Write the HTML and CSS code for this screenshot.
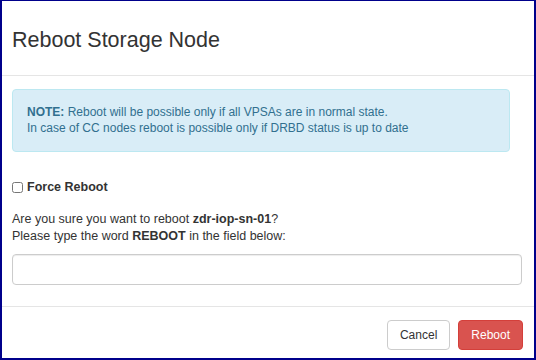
FILE: index.html
```html
<!doctype html>
<html lang="en">
<head>
    <meta charset="UTF-8">
    <title>Reboot Storage Node</title>
    <link rel="stylesheet" href="styles.css">
</head>
<body>
<div class="modal">
    <div class="modal-header">
        <h4 class="modal-title">Reboot Storage Node</h4>
    </div>
    <div class="modal-body">
        <div class="alert">
            <b>NOTE:</b> Reboot will be possible only if all VPSAs are in normal state.<br>
            In case of CC nodes reboot is possible only if DRBD status is up to date
        </div>
        <label class="check">
            <input type="checkbox">
            <span>Force Reboot</span>
        </label>
        <p class="confirm">
            Are you sure you want to reboot <b>zdr-iop-sn-01</b>?<br>
            Please type the word <b>REBOOT</b> in the field below:
        </p>
        <input class="form-control" type="text">
    </div>
    <div class="modal-footer">
        <button class="btn btn-default">Cancel</button>
        <button class="btn btn-danger">Reboot</button>
    </div>
</div>
</body>
</html>
```

FILE: styles.css
```css
* {
    margin: 0;
    padding: 0;
    box-sizing: border-box;
}

html,
body {
    width: 100%;
    height: 100%;
}

body {
    background: #fff;
    font-family: "Liberation Sans", Arial, sans-serif;
    font-size: 12px;
    color: #333;
}

.modal {
    display: flex;
    flex-direction: column;
    width: 536px;
    height: 360px;
    border-style: solid;
    border-color: #00008b;
    border-width: 1px 2px 2px 2px;
}

.modal-header {
    height: 75px;
    padding: 0 10px;
    display: flex;
    align-items: center;
    border-bottom: 1px solid #e5e5e5;
}

.modal-title {
    font-size: 21.5px;
    font-weight: normal;
    color: #333;
    padding-top: 4px;
}

.modal-body {
    flex: 1;
    padding: 13px 10px 0;
}

.alert {
    width: 498px;
    padding: 14px 14px 15px;
    line-height: 16px;
    background-color: #d9edf7;
    border: 1px solid #bce8f1;
    border-radius: 4px;
    color: #31708f;
}

.check {
    display: flex;
    align-items: center;
    margin-top: 28px;
    font-size: 12.5px;
    font-weight: bold;
}

.check input {
    width: 11px;
    height: 11px;
    margin-right: 4px;
}

.confirm {
    margin-top: 17px;
    font-size: 12.5px;
    line-height: 17px;
}

.form-control {
    display: block;
    width: 510px;
    height: 31px;
    margin-top: 9px;
    border: 1px solid #ccc;
    border-radius: 4px;
    box-shadow: inset 0 1px 1px rgba(0, 0, 0, 0.075);
}

.modal-footer {
    height: 52px;
    display: flex;
    justify-content: flex-end;
    align-items: flex-start;
    gap: 8px;
    padding: 13px 11px 0;
    border-top: 1px solid #e5e5e5;
}

.btn {
    height: 30px;
    padding: 0 12px;
    font-family: "Liberation Sans", Arial, sans-serif;
    font-size: 12px;
    border: 1px solid #ccc;
    border-radius: 4px;
    background: #fff;
    color: #333;
}

.btn-danger {
    background-color: #d9534f;
    border-color: #d43f3a;
    color: #fff;
}
```
